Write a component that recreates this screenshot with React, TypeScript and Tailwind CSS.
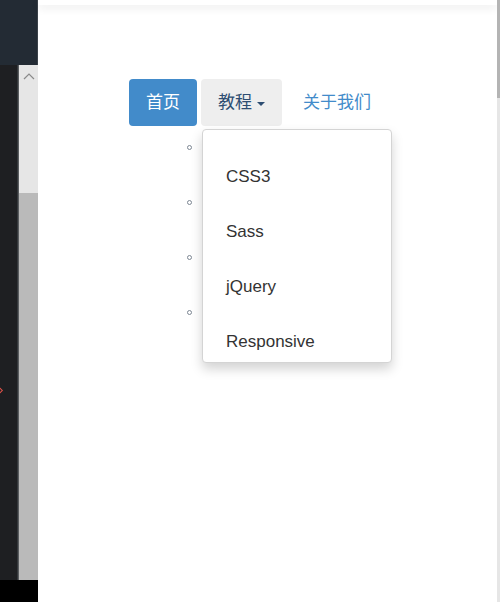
import React from "react";

const items = ["CSS3", "Sass", "jQuery", "Responsive"];

const App = () => {
  return (
    <div className="flex h-[602px] w-[500px] overflow-hidden bg-white font-['Liberation_Sans','Noto_Sans_CJK_SC',sans-serif]">
      {/* left editor strip */}
      <div className="flex w-[38px] flex-col">
        <div className="h-[65px] border-r border-[#3b4249] bg-[#232b34]" />
        <div className="flex flex-1">
          <div className="relative w-[18px] border-r border-[#34373b] bg-[#1e1f22]">
            <span className="absolute left-[-3px] top-[323px] h-[5px] w-[5px] rotate-45 border border-[#e0524a]" />
          </div>
          <div className="flex w-[20px] flex-col border-l border-[#5a5d60]">
            <div className="flex h-[128px] justify-center bg-[#e6e6e6] pt-[7px]">
              <svg width="12" height="8" viewBox="0 0 12 8">
                <path d="M1 7 L6 2 L11 7" fill="none" stroke="#8a8a8a" strokeWidth="1.2" />
              </svg>
            </div>
            <div className="flex-1 bg-[#bababa]" />
          </div>
        </div>
        <div className="h-[22px] bg-black" />
      </div>

      {/* page */}
      <div className="flex flex-1 flex-col">
        <div className="h-[5px] bg-white shadow-[0_3px_8px_rgba(0,0,0,0.09)]" />
        <ul className="ml-[91px] mt-[74px] flex gap-[4px] text-[17px]">
          <li>
            <a className="flex h-[47px] items-center rounded-[4px] bg-[#428bca] px-[17px] text-white">首页</a>
          </li>
          <li className="relative">
            <a className="flex h-[47px] items-center rounded-[4px] bg-[#eeeeee] px-[17px] text-[#2d4d72]">
              教程
              <span className="ml-[5px] mt-[2px] h-0 w-0 border-x-[4px] border-t-[4px] border-x-transparent border-t-[#2d4d72]" />
            </a>
            <ul className="absolute left-[1px] top-[50px] z-10 w-[190px] rounded-[4px] border border-[#d4d4d4] bg-white py-[6px] shadow-[0_6px_12px_rgba(0,0,0,0.175)]">
              {items.map((item) => (
                <li key={item} className="relative h-[55px]">
                  <span className="absolute left-[-16px] top-[9px] h-[5px] w-[5px] rounded-full border border-[#7d8793]" />
                  <a className="block pl-[23px] pt-[31px] text-[17px] leading-[20px] text-[#333]">{item}</a>
                </li>
              ))}
            </ul>
          </li>
          <li>
            <a className="flex h-[47px] items-center px-[17px] text-[#428bca]">关于我们</a>
          </li>
        </ul>
      </div>

      {/* right scrollbar */}
      <div className="flex w-[3px] flex-col">
        <div className="h-[98px] bg-[#b4b4b4]" />
        <div className="flex-1 bg-[#e6e6e6]" />
      </div>
    </div>
  );
};

export default App;
